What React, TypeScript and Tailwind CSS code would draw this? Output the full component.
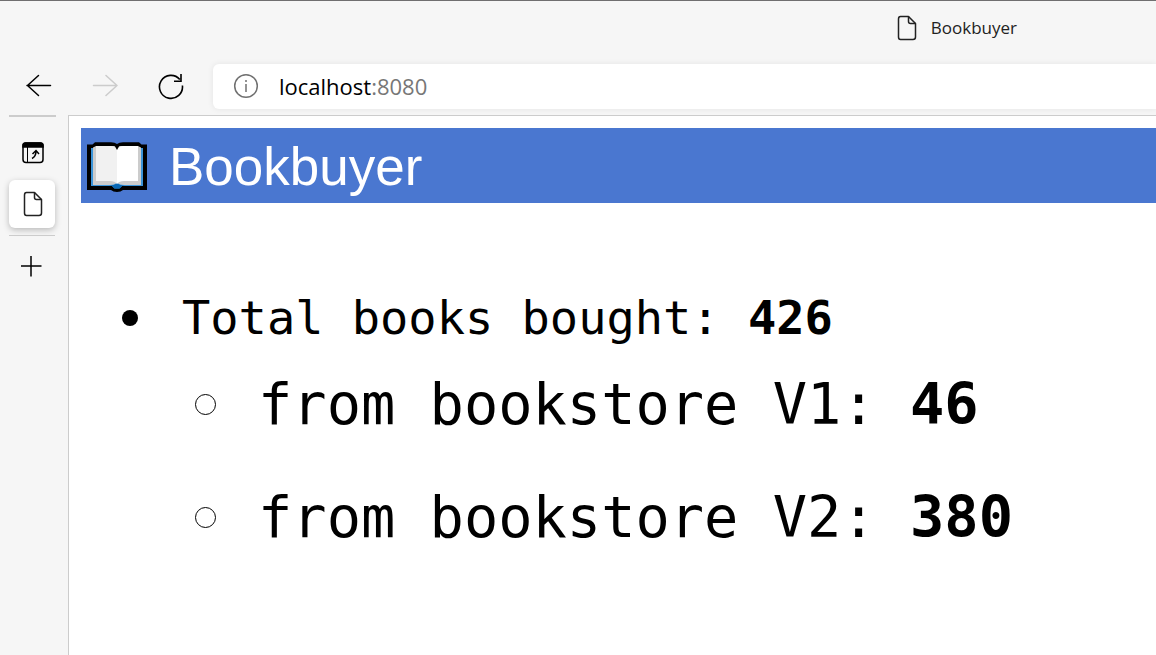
import React from "react";

function PageIcon({ className }: { className: string }) {
  return (
    <svg className={className} viewBox="0 0 20 26" fill="none" stroke="currentColor" strokeWidth="1.5" strokeLinejoin="round" aria-hidden="true">
      <path d="M3.5 1.5H11.5L18.5 8.5V22Q18.5 24.5 16 24.5H3.5Q1.5 24.5 1.5 22V4Q1.5 1.5 3.5 1.5Z" />
      <path d="M11.5 1.5V6.5Q11.5 8.5 13.5 8.5H18.5" />
    </svg>
  );
}

function BookIcon() {
  return (
    <svg className="h-[50px] w-[60px] shrink-0" viewBox="0 0 60 50" aria-hidden="true">
      <path d="M0 2.5H5.5L8 .3H24Q28 .3 30 2Q32 .3 36 .3H52L54.5 2.5H60V48H36Q34 50 30 50Q26 50 24 48H0Z" fill="#000" />
      <path d="M4 6H56V44H35L32.5 46.5H27.5L25 44H4Z" fill="#3b94d9" />
      <path d="M22 44Q28 43 30 41Q32 43 38 44H35L32.5 46.5H27.5L25 44Z" fill="#0868b5" />
      <path d="M6 5.5L9 4H51L54 5.5V43H37Q33 43 30 41Q27 43 23 43H6Z" fill="#ccc" />
      <path d="M9 4H24Q28 4 30 8V42Q28 39 23 39H9Z" fill="#f1f1f1" />
      <path d="M51 4H36Q32 4 30 8V42Q32 39 37 39H51Z" fill="#fff" />
      <path d="M26.5 3H33.5Q31 5 30 8Q29 5 26.5 3Z" fill="#000" />
    </svg>
  );
}

function Toolbar() {
  return (
    <div className="flex h-[58px] items-center">
      <nav className="flex w-[213px] shrink-0 items-center gap-[38px] pl-6" aria-label="Navigation">
        <button aria-label="Back" className="size-7">
          <svg className="size-7" viewBox="0 0 28 28" fill="none" stroke="#000" strokeWidth="1.5" strokeLinecap="round" strokeLinejoin="round"><path d="M26.5 13.5H3M14.5 3.5L3.5 13.5L14.5 23.5" /></svg>
        </button>
        <button aria-label="Forward" className="size-7" disabled>
          <svg className="size-7" viewBox="0 0 28 28" fill="none" stroke="#ccc" strokeWidth="1.5" strokeLinecap="round" strokeLinejoin="round"><path d="M3.5 13.5H27M16 3.5L27 13.5L16 23.5" /></svg>
        </button>
        <button aria-label="Reload" className="size-7">
          <svg className="size-7" viewBox="0 0 28 28" fill="none" stroke="#000" strokeWidth="1.6"><path d="M23.8 7.5A11.5 11.5 0 1 0 26.4 13.5M25 2V9.3H18" /></svg>
        </button>
      </nav>
      <div className="flex h-[45px] flex-1 items-center rounded-l-md bg-white pl-5 shadow-[0_0_6px_#00000014]">
        <svg className="size-[26px]" viewBox="0 0 26 26" fill="none" stroke="#707070" strokeWidth="1.5" aria-hidden="true">
          <circle cx="13" cy="13" r="11.3" />
          <path d="M13 11V19M13 7V9" />
        </svg>
        <a href="#" className="ml-5 font-['Open_Sans',sans-serif] text-[22px] leading-7 text-black">
          localhost<span className="text-[#777]">:8080</span>
        </a>
      </div>
    </div>
  );
}

function Sidebar() {
  return (
    <aside className="flex w-16 shrink-0 flex-col items-center">
      <div className="h-0.5 w-[47px] bg-[#ccc]" />
      <button aria-label="Tab actions" className="mt-6">
        <svg className="size-6" viewBox="0 0 24 24" fill="none" stroke="#000" strokeWidth="1.5">
          <rect x="3" y="2" width="20" height="19.5" rx="3" />
          <path d="M3 6V4.5Q3 2 5.5 2H20.5Q23 2 23 4.5V6Z" fill="#000" />
          <path d="M7.5 6V21.5" strokeWidth="1" />
          <path d="M12 17.5Q16 15.5 16 10M12.5 13L16 9.5L19 13" />
        </svg>
      </button>
      <button aria-label="Bookbuyer" className="mt-[15px] flex h-12 w-[46px] items-center justify-center rounded-md bg-white pl-0.5 text-[#222] shadow-[0_2px_6px_#00000040]">
        <PageIcon className="h-[26px] w-5" />
      </button>
      <div className="mt-[7px] h-px w-[46px] bg-[#ccc]" />
      <button aria-label="New tab" className="mt-5">
        <svg className="size-[22px]" viewBox="0 0 22 22" stroke="#000" strokeWidth="1.5"><path d="M0 10H20.5M10 0V20.5" /></svg>
      </button>
    </aside>
  );
}

function StoreLine({ version, count }: { version: string; count: number }) {
  return (
    <li className="flex items-center">
      <span className="mr-[42px] size-[21px] rounded-full border border-black" />
      <span className="whitespace-pre text-[57px] leading-[64px]">from bookstore {version}: <b>{count}</b></span>
    </li>
  );
}

export default function App() {
  return (
    <div className="flex min-h-screen flex-col overflow-hidden border-t border-[#706f70] bg-[#f6f6f6] text-black">
      <header>
        <div className="flex h-14 items-center justify-end gap-[14px] pr-[139px] pb-0.5">
          <PageIcon className="h-[26px] w-5 text-[#222]" />
          <span className="font-['Open_Sans',sans-serif] text-[17px] leading-6 text-[#222]">Bookbuyer</span>
        </div>
        <Toolbar />
      </header>
      <div className="flex flex-1">
        <Sidebar />
        <main className="ml-1 min-w-0 flex-1 border-t border-l border-[#ccc] bg-white pt-3 pl-3">
          <div className="flex h-[75px] items-center gap-[22px] bg-[#4a77d0] pt-0.5 pl-1.5 text-white">
            <BookIcon />
            <h1 className="font-['Liberation_Sans',sans-serif] text-[53px] leading-[60px]">Bookbuyer</h1>
          </div>
          <ul className="mt-[85px] pl-[41px] font-['DejaVu_Sans_Mono',monospace]">
            <li>
              <div className="flex items-center">
                <span className="mr-11 size-4 rounded-full bg-black" />
                <span className="whitespace-pre text-[47px] leading-[60px]">Total books bought: <b>426</b></span>
              </div>
              <ul className="mt-6 flex flex-col gap-[49px] pl-[73px]">
                <StoreLine version="V1" count={46} />
                <StoreLine version="V2" count={380} />
              </ul>
            </li>
          </ul>
        </main>
      </div>
    </div>
  );
}
